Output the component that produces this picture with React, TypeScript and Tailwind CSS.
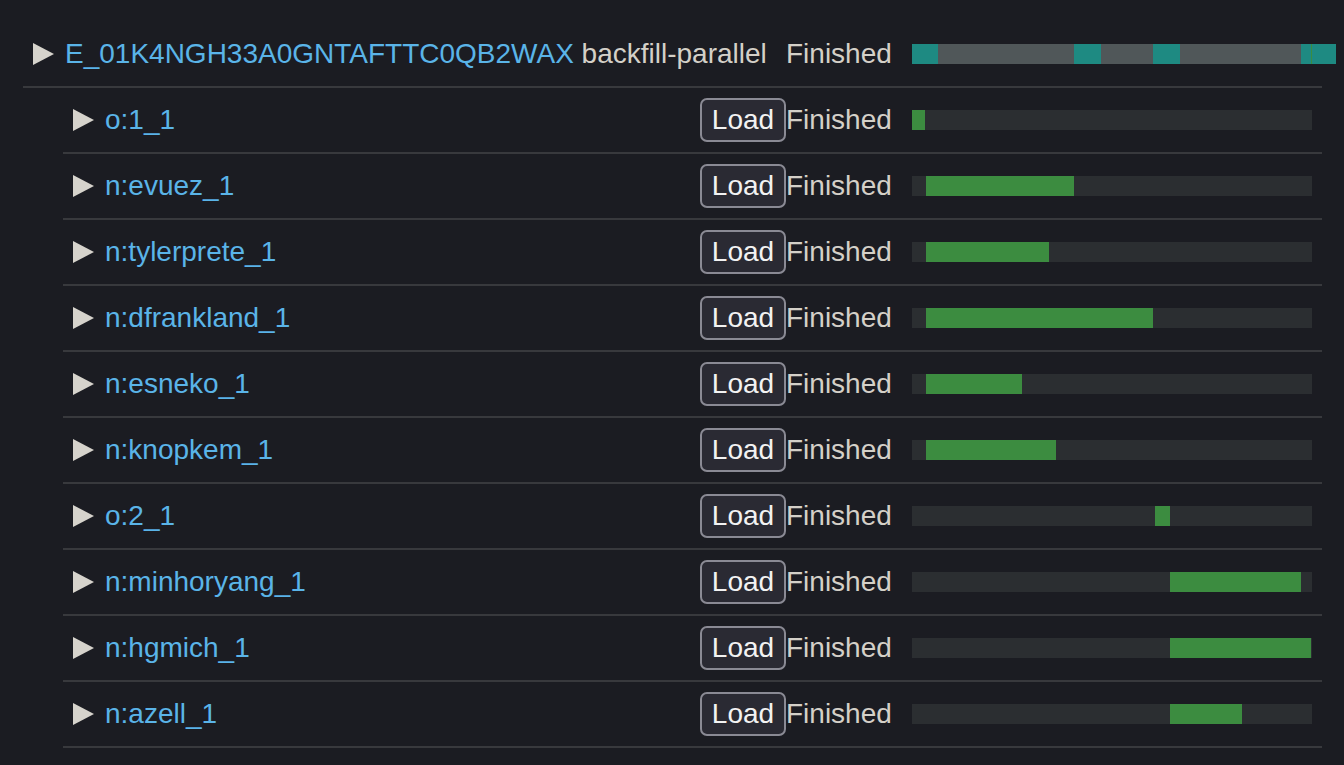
const FONT = { fontFamily: '"Liberation Sans", Arial, sans-serif' };

type Child = { name: string; start: number; width: number };

const children: Child[] = [
  { name: "o:1_1", start: 0, width: 13 },
  { name: "n:evuez_1", start: 14, width: 148 },
  { name: "n:tylerprete_1", start: 14, width: 123 },
  { name: "n:dfrankland_1", start: 14, width: 227 },
  { name: "n:esneko_1", start: 14, width: 96 },
  { name: "n:knopkem_1", start: 14, width: 130 },
  { name: "o:2_1", start: 243, width: 15 },
  { name: "n:minhoryang_1", start: 258, width: 131 },
  { name: "n:hgmich_1", start: 258, width: 141 },
  { name: "n:azell_1", start: 258, width: 72 },
];

const headerSegments = [
  { start: 0, width: 26 },
  { start: 162, width: 27 },
  { start: 241, width: 27 },
  { start: 389, width: 35 },
];

function Arrow() {
  return (
    <svg width="21" height="22" viewBox="0 0 21 22" className="shrink-0">
      <polygon points="0,0 21,11 0,22" fill="#d6d3cc" />
    </svg>
  );
}

function ChildRow({ item }: { item: Child }) {
  return (
    <div className="flex items-center h-[66px] border-b-2 border-[#38393d] px-[10px]">
      <div className="flex flex-1 items-center gap-[11px]">
        <Arrow />
        <span className="text-[28px] leading-none text-[#5ab4e8]">{item.name}</span>
      </div>
      <button className="h-[44px] w-[86px] rounded-[7px] border-2 border-[#8a8a94] bg-[#2a2a33] text-[28px] leading-none text-[#f2f2f2]">
        Load
      </button>
      <span className="w-[106px] text-[28px] leading-none text-[#d4d0c8]">Finished</span>
      <div className="relative ml-5 h-5 w-[400px] shrink-0 bg-[#2b2e31]">
        <div
          className="absolute top-0 h-5 bg-[#3c8c40]"
          style={{ left: item.start, width: item.width }}
        />
      </div>
    </div>
  );
}

export default function App() {
  return (
    <div className="min-h-screen bg-[#1b1c22] pt-[22px]" style={FONT}>
      <div className="ml-[23px] w-[1299px]">
        <div className="flex items-center h-[66px] border-b-2 border-[#38393d] px-[10px]">
          <div className="flex flex-1 items-center gap-[11px] whitespace-nowrap">
            <Arrow />
            <span className="text-[28px] leading-none">
              <span className="text-[#5ab4e8]">E_01K4NGH33A0GNTAFTTC0QB2WAX</span>
              <span className="text-[#d4d0c8]"> backfill-parallel</span>
            </span>
          </div>
          <span className="w-[106px] text-[28px] leading-none text-[#d4d0c8]">Finished</span>
          <div className="relative ml-5 h-5 w-[424px] shrink-0 -mr-[24px] bg-[#505759]">
            {headerSegments.map((s, i) => (
              <div
                key={i}
                className="absolute top-0 h-5 bg-[#1e8a82]"
                style={{ left: s.start, width: s.width }}
              />
            ))}
            <div className="absolute top-0 h-5 w-px bg-[#3c8c40]" style={{ left: 399 }} />
          </div>
        </div>
        <div className="ml-10">
          {children.map((c) => (
            <ChildRow key={c.name} item={c} />
          ))}
        </div>
      </div>
    </div>
  );
}
